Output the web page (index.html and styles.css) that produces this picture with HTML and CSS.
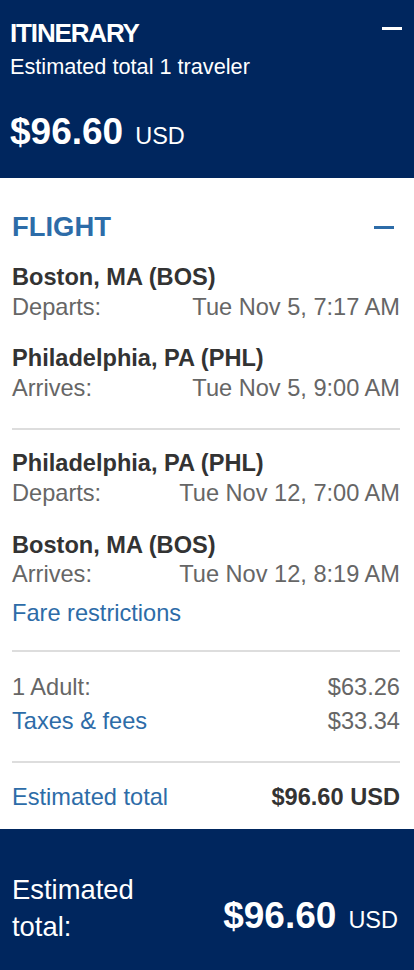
FILE: index.html
```html
<!DOCTYPE html>
<html lang="en">
<head>
<meta charset="utf-8">
<title>Itinerary</title>
<link rel="stylesheet" href="styles.css">
</head>
<body>
<div class="panel">
  <header class="summary">
    <div class="summary-top">
      <h1 class="summary-title">ITINERARY</h1>
      <span class="minus minus-light"></span>
    </div>
    <p class="summary-sub">Estimated total 1 traveler</p>
    <p class="summary-price"><span class="amount">$96.60</span><span class="cur">USD</span></p>
  </header>

  <section class="flight">
    <div class="flight-head">
      <h2 class="flight-title">FLIGHT</h2>
      <span class="minus minus-blue"></span>
    </div>

    <div class="leg">
      <div class="stop">
        <div class="city">Boston, MA (BOS)</div>
        <div class="row"><span>Departs:</span><span>Tue Nov 5, 7:17 AM</span></div>
      </div>
      <div class="stop">
        <div class="city">Philadelphia, PA (PHL)</div>
        <div class="row"><span>Arrives:</span><span>Tue Nov 5, 9:00 AM</span></div>
      </div>
    </div>

    <hr class="divider divider-a">

    <div class="leg leg-return">
      <div class="stop">
        <div class="city">Philadelphia, PA (PHL)</div>
        <div class="row"><span>Departs:</span><span>Tue Nov 12, 7:00 AM</span></div>
      </div>
      <div class="stop">
        <div class="city">Boston, MA (BOS)</div>
        <div class="row"><span>Arrives:</span><span>Tue Nov 12, 8:19 AM</span></div>
      </div>
      <a class="link fare" href="#">Fare restrictions</a>
    </div>

    <hr class="divider divider-b">

    <div class="prices">
      <div class="row"><span>1 Adult:</span><span>$63.26</span></div>
      <div class="row"><a class="link" href="#">Taxes &amp; fees</a><span>$33.34</span></div>
    </div>

    <hr class="divider divider-c">

    <div class="row total-row">
      <a class="link" href="#">Estimated total</a>
      <span class="total-amount">$96.60 USD</span>
    </div>
  </section>

  <footer class="footer">
    <div class="footer-label">Estimated<br>total:</div>
    <div class="footer-price"><span class="amount">$96.60</span><span class="cur">USD</span></div>
  </footer>
</div>
</body>
</html>
```

FILE: styles.css
```css
* { box-sizing: border-box; }

html, body {
  margin: 0;
  padding: 0;
  background: #ffffff;
}

body {
  font-family: "Liberation Sans", Arial, Helvetica, sans-serif;
  color: #333333;
}

.panel {
  width: 414px;
  min-height: 970px;
  display: flex;
  flex-direction: column;
}

/* ---------- Header ---------- */
.summary {
  background: #00265e;
  color: #ffffff;
  height: 178px;
  padding: 18px 12px 0 10px;
}

.summary-top {
  display: flex;
  justify-content: space-between;
  align-items: flex-start;
}

.summary-title {
  margin: 0;
  font-size: 26px;
  line-height: 30px;
  font-weight: 700;
  letter-spacing: -1.15px;
}

.minus {
  display: block;
  width: 20px;
  height: 3px;
  flex: none;
}

.minus-light {
  background: #ffffff;
  margin-top: 9px;
}

.minus-blue {
  background: #2d6ca8;
  margin-top: 15px;
  margin-right: 6px;
}

.summary-sub {
  margin: 6px 0 0;
  font-size: 21.7px;
  line-height: 26px;
}

.summary-price {
  margin: 30px 0 0;
  line-height: 44px;
}

.amount {
  font-size: 37px;
  font-weight: 700;
}

.cur {
  font-size: 23.5px;
  margin-left: 12px;
}

/* ---------- Flight ---------- */
.flight {
  padding: 33px 14px 17px 12px;
}

.flight-head {
  display: flex;
  justify-content: space-between;
  align-items: flex-start;
}

.flight-title {
  margin: 0;
  font-size: 27.4px;
  line-height: 32px;
  font-weight: 700;
  color: #2d6ca8;
}

.leg {
  display: flex;
  flex-direction: column;
  gap: 22px;
  margin-top: 20px;
}

.leg-return {
  margin-top: 19px;
  gap: 22.5px;
}

.city {
  font-size: 23.6px;
  line-height: 29.5px;
  font-weight: 700;
  color: #333333;
}

.row {
  display: flex;
  justify-content: space-between;
  align-items: baseline;
  font-size: 23.6px;
  line-height: 29.5px;
  color: #666666;
}

.link {
  color: #2d6ca8;
  text-decoration: none;
}

.fare {
  display: block;
  font-size: 23.6px;
  line-height: 29.5px;
  margin-top: -13px;
}

.divider {
  border: 0;
  height: 2px;
  background: #dddddd;
  margin: 0;
}

.divider-a { margin-top: 25px; }
.divider-b { margin-top: 21.7px; }
.divider-c { margin-top: 25px; }

.prices {
  display: flex;
  flex-direction: column;
  gap: 4px;
  margin-top: 21px;
}

.total-row {
  margin-top: 19.5px;
}

.total-amount {
  font-weight: 700;
  color: #333333;
}

/* ---------- Footer ---------- */
.footer {
  background: #00265e;
  color: #ffffff;
  flex: 1;
  display: flex;
  justify-content: space-between;
  align-items: flex-end;
  padding: 41px 16px 25px 12px;
}

.footer-label {
  font-size: 27.4px;
  line-height: 37px;
}

.footer-price {
  line-height: 44px;
}
```
